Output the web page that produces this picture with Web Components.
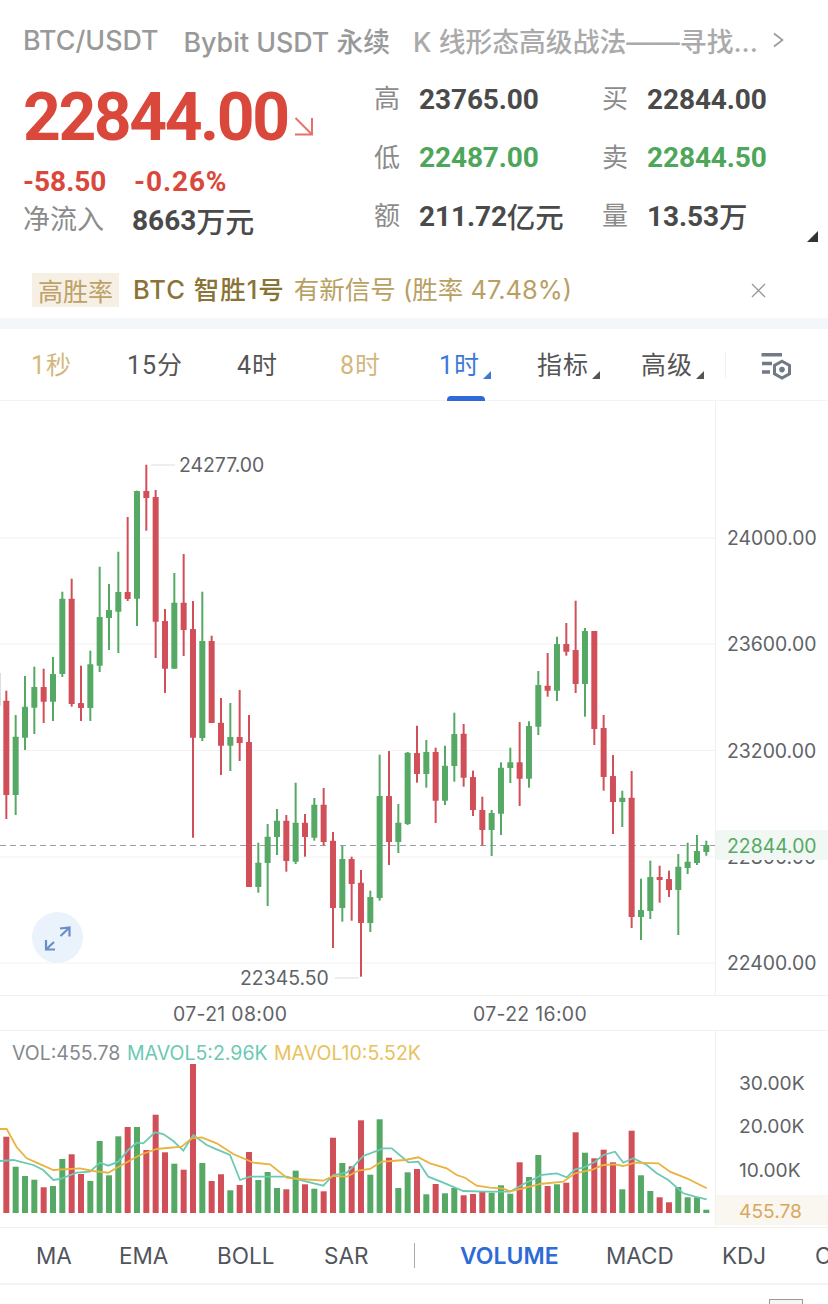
<!DOCTYPE html>
<html lang="zh"><head><meta charset="utf-8"><title>BTC/USDT</title>
<style>
html,body{margin:0;padding:0;background:#fff}
body{width:828px;height:1304px;overflow:hidden;font-family:Inter,"Noto Sans CJK SC",sans-serif;color:#444}
</style></head><body>
<quote-header>
  <span slot="pair">BTC/USDT</span>
  <span slot="market">Bybit USDT 永续</span>
  <span slot="news">K 线形态高级战法——寻找...</span>
  <stat-cell label="高" slot="stats"><b>23765.00</b></stat-cell>
  <stat-cell label="买" slot="stats"><b>22844.00</b></stat-cell>
  <stat-cell label="低" tone="up" slot="stats"><b>22487.00</b></stat-cell>
  <stat-cell label="卖" tone="up" slot="stats"><b>22844.50</b></stat-cell>
  <stat-cell label="额" slot="stats"><b>211.72</b>亿元</stat-cell>
  <stat-cell label="量" slot="stats"><b>13.53</b>万</stat-cell>
</quote-header>
<signal-bar></signal-bar>
<period-tabs></period-tabs>
<candle-chart></candle-chart>
<volume-chart></volume-chart>
<indicator-tabs></indicator-tabs>
<page-foot></page-foot>
<script>
const CJK='"Noto Sans CJK SC",sans-serif';
class Base extends HTMLElement{
  constructor(){super();this.attachShadow({mode:'open'}).innerHTML=this.markup();}
}
customElements.define('stat-cell',class extends Base{
  markup(){return `<style>
  :host{display:flex;align-items:center;height:58.5px;color:#4a4a4a}
  .l{width:45px;color:#8b8b8b;font:400 26px/30px ${CJK};margin-top:-4px}
  .v{display:flex;align-items:center;font:500 28.5px/30px ${CJK};margin-top:-1px}
  ::slotted(b){font:700 28px/30px Roboto,sans-serif;letter-spacing:-.1px;margin-top:2px}
  :host([tone=up]){color:#4da65a}
  </style><span class="l"></span><span class="v"><slot></slot></span>`}
  connectedCallback(){this.shadowRoot.querySelector('.l').textContent=this.getAttribute('label')}
});
customElements.define('quote-header',class extends Base{
  markup(){return `<style>
  :host{display:block;position:relative;height:245.5px}
  .title{display:flex;align-items:center;padding:0 0 0 23px;box-sizing:border-box;height:80px;margin-bottom:-10px;font:500 26.8px Inter,${CJK};color:#999;white-space:nowrap}
  .title ::slotted([slot=market]){margin-left:25px}
  .title ::slotted([slot=news]){margin-left:23px;color:#aaa}
  .chev{margin-left:14px}
  .main{display:flex;padding-left:23px}
  .left{width:351px}
  .price{display:flex;height:92px;align-items:center;font:700 66px/92px Roboto,sans-serif;letter-spacing:-2.45px;color:#d9483b}
  .price span{margin-top:4px}
  .price svg{margin:21px 0 0 6px}
  .chg{display:flex;height:38px;align-items:center;font:700 28px Roboto,sans-serif;color:#d9483b}
  .chg span:first-child{width:111px}
  .flow span:first-child{width:109px}
  .chg span+span{letter-spacing:.9px}
  .flow{display:flex;height:40px;align-items:center;font:400 27px/30px ${CJK};color:#8b8b8b}
  .flow>span:first-child{margin-top:-4px}
  .flow .n{color:#4a4a4a;font:500 29px/30px ${CJK};display:flex;align-items:center;margin-top:-1px}
  .flow b{font:700 28px/30px Roboto,sans-serif;margin-top:3px}
  .stats{display:grid;grid-template-columns:228px 1fr}
  .corner{position:absolute;right:10px;top:231px}
  </style>
  <div class="title"><slot name="pair"></slot><slot name="market"></slot><slot name="news"></slot>
  <svg class="chev" width="13" height="16" viewBox="0 0 13 16"><path d="M2 1.5 10.5 8 2 14.5" fill="none" stroke="#999" stroke-width="1.6"/></svg></div>
  <div class="main"><div class="left">
    <div class="price"><span>22844.00</span><svg width="20" height="20" viewBox="0 0 20 20"><path d="M1.5 1 18 17.5M18 1V17.5H1" fill="none" stroke="#e8706a" stroke-width="2"/></svg></div>
    <div class="chg"><span>-58.50</span><span>-0.26%</span></div>
    <div class="flow"><span>净流入</span><span class="n"><b>8663</b>万元</span></div>
  </div><div class="stats"><slot name="stats"></slot></div></div>
  <svg class="corner" width="11" height="11" viewBox="0 0 11 11"><path d="M11 0V11H0Z" fill="#333"/></svg>`}
});
customElements.define('signal-bar',class extends Base{
  markup(){return `<style>
  :host{display:flex;position:relative;box-sizing:border-box;padding:27.5px 0 0 32px;align-items:flex-start;font:400 25.5px Inter,${CJK};color:#b9a062;white-space:nowrap;border-bottom:11px solid #f4f7fa;height:83.5px}
  .tag{height:34px;width:87px;background:#f6efe3;display:flex;align-items:center;justify-content:center;font-size:25px;color:#bda169}
  .name{margin-left:14px;line-height:34px;color:#8a7336;font-weight:500;letter-spacing:1px}
  .msg{margin-left:9px;line-height:34px}
  .x{margin:10px 0 0 auto;position:absolute;left:751px}
  </style><span class="tag">高胜率</span><span class="name">BTC 智胜1号</span><span class="msg">有新信号 (胜率 47.48%)</span>
  <svg class="x" width="15" height="15" viewBox="0 0 15 15"><path d="M1 1 14 14M14 1 1 14" stroke="#999" stroke-width="1.3" fill="none"/></svg>`}
});
customElements.define('period-tabs',class extends Base{
  markup(){
  const tri=c=>`<svg class="t" width="8" height="8" viewBox="0 0 8 8"><path d="M8 0V8H0Z" fill="${c}"/></svg>`;
  return `<style>
  :host{display:grid;grid-template-columns:96px 110px 103px 99px 98px 104px 84px 35px 1fr;height:72px;box-sizing:border-box;padding-left:31px;align-items:center;font:400 25px/32px Roboto,${CJK};color:#555;border-bottom:1px solid #f2f3f4;position:relative}
  span{display:flex;align-items:center;white-space:nowrap;height:40px;margin-top:2px;letter-spacing:1px}
  .g{color:#d3b87d}.b{color:#3c78d8}
  .t{align-self:flex-end;margin:0 0 7px 3px}
  .d{width:1px;height:26px;background:#f0f0f0}
  .u{position:absolute;left:447px;top:67px;width:38px;height:5px;border-radius:4px 4px 0 0;background:#2f6bd6}
  .cfg{margin-top:2px}
  </style>
  <span class="g">1秒</span><span>15分</span><span>4时</span><span class="g">8时</span>
  <span class="b">1时${tri('#3c78d8')}</span><span>指标${tri('#555')}</span><span>高级${tri('#555')}</span>
  <i class="d"></i>
  <svg class="cfg" width="34" height="29" viewBox="0 0 34 29"><path d="M1.5 3.7H22M2 12.5H12M2 21H10" stroke="#727a87" stroke-width="3.6" fill="none"/><path d="M22 10.3 29.5 14.4V22.8L22 27 14.5 22.8V14.4Z" fill="none" stroke="#727a87" stroke-width="3"/><circle cx="22" cy="18.6" r="2.8" fill="#727a87"/></svg>
  <i class="u"></i>`}
});
const R='r',G='g';
const K=[[R,690.7,700.7,795,819],[G,715,736.7,795,815],[G,676,706.7,737.7,750],[G,666.7,687,707.7,734],[R,668.7,687,701.7,723],[G,657,674,701.7,721],[G,591.7,598.7,674,677],[R,578.7,598.7,704,706.7],[R,665.7,703,708,721],[G,650.7,664.3,708,721],[G,566.7,617,665.7,672],[G,584,610,618,650],[G,551.7,592,611.7,653],[R,517,592,599,601],[G,490.7,491,598.7,626],[R,464.7,491,498,530.7],[R,490,497,621.7,658],[R,609,621,668.7,693],[G,573,602.7,668.7,668.7],[R,554,602.7,630,656],[R,601,629,737.7,837.7],[G,591.7,641,738,741],[R,635.7,641,723,723],[R,698,722.7,745.7,775],[G,703,737,745.7,771],[R,690,737,743,761],[R,715,742,887,887],[G,842.7,862.7,887,892.7],[G,824,836.7,863,906],[G,809,820.7,837,855],[R,815,820.7,861,871.7],[G,782.7,822.7,861.7,864],[R,814,822.7,837,856.7],[G,798,804.7,837.7,840.7],[R,788,804.7,842,845.7],[R,832,840.7,908,948],[G,845.7,859,908,921.7],[R,856.7,859,884,920.7],[R,870,882.7,923,976.7],[G,890.7,897,923,932],[G,754.7,796,898,900.7],[R,751,796,842,865],[G,804,822.7,842,853],[G,752,752.7,824,825],[R,725.7,753,774,782.7],[G,740,752,774,787.7],[R,747.7,752,800.7,823],[G,745.7,765.7,800.7,805],[G,712.7,734,766,781.7],[R,724,733.7,777.7,786.7],[R,770.7,777,810,816],[R,796.7,810,830,845.7],[G,810,813,830,856],[G,762.3,767.7,813.7,835],[G,747.7,762.3,768,783],[R,722,762.3,778.7,806],[G,721.3,726,778.7,787.7],[G,671,685,726.7,735],[R,653,685.7,690.7,696.7],[G,636.7,644,690.7,701],[R,623,644,651.7,655.7],[R,600.7,650,684,693],[G,628,631,684,716.7],[R,631,631,729,745],[R,715,728,777,790.7],[R,755,776,802,834],[G,790.7,797.7,802,827],[R,771,797.7,917,928],[G,878.7,910,917,940],[G,860.7,877,911,919],[R,865.7,877,880,902.7],[R,870.7,879,890,897],[G,854,866.7,890,935],[G,842.7,861.7,868,874],[G,835,851,863,865],[G,840.7,845,852,855.7]];
const V=[1136.7,1166.7,1176,1179.7,1187.3,1186,1159,1154.3,1174,1181,1141,1175.3,1136.3,1127,1127,1150,1114.7,1152.3,1163.7,1169.7,1064,1163,1181,1174.3,1190.3,1185,1152,1180,1172,1188,1189.3,1170.7,1184.3,1188.7,1191.3,1137.7,1163,1166.3,1120.3,1174.7,1119.3,1157.7,1188,1172.3,1169,1194.3,1184,1193.3,1188,1195.3,1194,1191.7,1192.7,1185.3,1193.7,1162.3,1177,1155,1186,1184.3,1182.7,1132.3,1152.7,1158.3,1149.7,1162.3,1189.3,1130.7,1175.3,1191,1197.3,1202.3,1187,1197.3,1197.3,1209.7];
const X=i=>6.33+9.333*i;
const COL={r:'#d14f58',g:'#55a964'};
const GRID='#f3f3f3',AX='#5f6368';
customElements.define('candle-chart',class extends Base{
  markup(){
  let c='';
  K.forEach((k,i)=>{const x=X(i),f=COL[k[0]];
    c+=`<path d="M${x} ${k[1]}V${k[4]}" stroke="${f}" stroke-width="2"/><rect x="${x-3}" y="${k[2]}" width="6" height="${Math.max(k[3]-k[2],2)}" rx=".5" fill="${f}"/>`;});
  const g=[538,644,750.5,857,963].map(y=>`<path d="M0 ${y}H715" stroke="${GRID}"/>`).join('');
  const lab=[['24000.00',538],['23600.00',644],['23200.00',750.5],['22800.00',857],['22400.00',963]].map(a=>`<text x="727" y="${a[1]+7}" class="t">${a[0]}</text>`).join('');
  return `<style>:host{display:block;height:630px}svg{display:block}
  .t{font:400 19.4px Inter,sans-serif;fill:${AX}}.d{letter-spacing:.35px}</style>
  <svg width="828" height="630" viewBox="0 401 828 630">
  ${g}<path d="M715.5 401V995M0 995.5H828M0 1030.5H828" stroke="#f1f1f1" fill="none"/>
  <path d="M0 845.5H715" stroke="#9aa0a6" stroke-dasharray="6 4"/>
  <path d="M.5 673V706" stroke="#ddd"/>
  ${c}${lab}
  <rect x="716" y="830" width="112" height="30" fill="#f1f7f2"/>
  <text x="727" y="852.5" class="t" style="fill:#55a964">22844.00</text>
  <path d="M151 465H175M335 978H359" stroke="#ddd"/>
  <text x="179" y="472" class="t">24277.00</text><text x="240" y="985" class="t">22345.50</text>
  <text x="173" y="1020.5" class="t d">07-21 08:00</text><text x="473" y="1020.5" class="t d">07-22 16:00</text>
  <circle cx="57.5" cy="937.5" r="25.5" fill="#eaf2fb"/>
  <path d="M60 928.5 69.5 927.5V936.5M69.5 927.5 60.5 936M46 940V949.5H55M46 949.5 54 942" fill="none" stroke="#6a8ec8" stroke-width="2.2"/>
  </svg>`}
});
const teal=[[0,393,0],[40,390,0],[60,395,0],[100,405,0],[130,420,0],[160,450,0],[180,447,0],[230,428,0],[270,425,0],[300,398,0],[325,407,0],[355,395,0],[385,360,0],[410,338,0],[430,340,0],[465,307,0],[490,312,0],[520,333,0],[550,362,0],[580,315,0],[620,345,0],[650,358,0],[690,375,0],[720,450,0],[750,440,0],[50,440,270],[110,455,270],[160,467,270],[190,435,270],[230,428,270],[250,410,270],[280,378,270],[340,355,270],[365,355,270],[415,397,270],[445,395,270],[475,440,270],[520,458,270],[580,483,270],[640,485,270],[720,485,270],[760,463,270],[810,438,270],[0,435,540],[50,430,540],[80,442,540],[105,418,540],[130,413,540],[165,395,540],[190,375,540],[225,365,540],[250,398,540],[280,385,540],[320,405,540],[350,430,540],[385,450,540],[430,490,540],[465,500,540],[500,508,540]];
const gold=[[0,297,0],[20,297,0],[50,352,0],[80,385,0],[115,400,0],[160,420,0],[240,415,0],[280,423,0],[325,428,0],[360,408,0],[420,375,0],[470,357,0],[545,350,0],[575,325,0],[605,322,0],[650,340,0],[700,372,0],[760,398,0],[810,403,0],[50,443,270],[90,447,270],[160,452,270],[190,438,270],[230,440,270],[265,422,270],[300,417,270],[335,395,270],[365,393,270],[405,390,270],[445,382,270],[480,400,270],[530,415,270],[560,435,270],[585,443,270],[620,467,270],[660,473,270],[700,476,270],[720,484,270],[750,477,270],[800,465,270],[0,462,540],[70,455,540],[105,430,540],[160,418,540],[190,405,540],[225,403,540],[250,408,540],[285,398,540],[355,400,540],[390,425,540],[440,445,540],[500,475,540]];
const pts=a=>a.map(p=>((p[2]+p[0]/3).toFixed(1))+','+((1030+p[1]/3).toFixed(1))).join(' ');
customElements.define('volume-chart',class extends Base{
  markup(){
  const b=V.map((y,i)=>`<rect x="${X(i)-3}" y="${y}" width="6" height="${1213-y}" fill="${COL[K[i][0]]}"/>`).join('');
  return `<style>:host{display:block;height:197px}svg{display:block}
  .t{font:400 19.2px Inter,sans-serif;fill:${AX}}.l{font:400 19.5px Inter,sans-serif}</style>
  <svg width="828" height="197" viewBox="0 1031 828 197">
  <path d="M715.5 1031V1228M0 1227.5H828" stroke="#f1f1f1" fill="none"/>
  ${b}
  <polyline points="${pts(teal)}" fill="none" stroke="#6cc9b4" stroke-width="1.8"/>
  <polyline points="${pts(gold)}" fill="none" stroke="#eab23f" stroke-width="1.8"/>
  <text x="12" y="1060" class="l" fill="#85898e">VOL:455.78</text>
  <text x="127" y="1060" class="l" fill="#6cc9b4">MAVOL5:2.96K</text>
  <text x="274" y="1060" class="l" fill="#e8c25c">MAVOL10:5.52K</text>
  <text x="739" y="1090" class="t">30.00K</text><text x="739" y="1133" class="t">20.00K</text><text x="739" y="1177" class="t">10.00K</text>
  <rect x="716" y="1195" width="112" height="30" fill="#faf6f0"/>
  <text x="739" y="1218" class="t" style="fill:#d9a85f">455.78</text>
  </svg>`}
});
customElements.define('indicator-tabs',class extends Base{
  markup(){return `<style>
  :host{display:grid;grid-template-columns:83px 98px 107px 90px 47px 145px 116px 93px 1fr;height:57px;box-sizing:border-box;padding-left:36px;align-items:center;font:400 22.5px Inter,sans-serif;color:#50555c;border-bottom:2px solid #f3f3f3;overflow:hidden;white-space:nowrap}
  .d{width:1px;height:25px;background:#aaa}
  .a{color:#2f6bd6;font-weight:600;font-size:23px;margin-left:-1px}
  </style><span>MA</span><span>EMA</span><span>BOLL</span><span>SAR</span><i class="d"></i><span class="a">VOLUME</span><span>MACD</span><span>KDJ</span><span>CCI</span>`}
});
customElements.define('page-foot',class extends Base{
  markup(){return `<style>:host{display:block;height:19px;position:relative;overflow:hidden}
  i{position:absolute;left:769px;top:14px;width:32px;height:20px;border:1.5px solid #999;background:#f5f5f5}</style><i></i>`}
});
</script>
</body></html>
